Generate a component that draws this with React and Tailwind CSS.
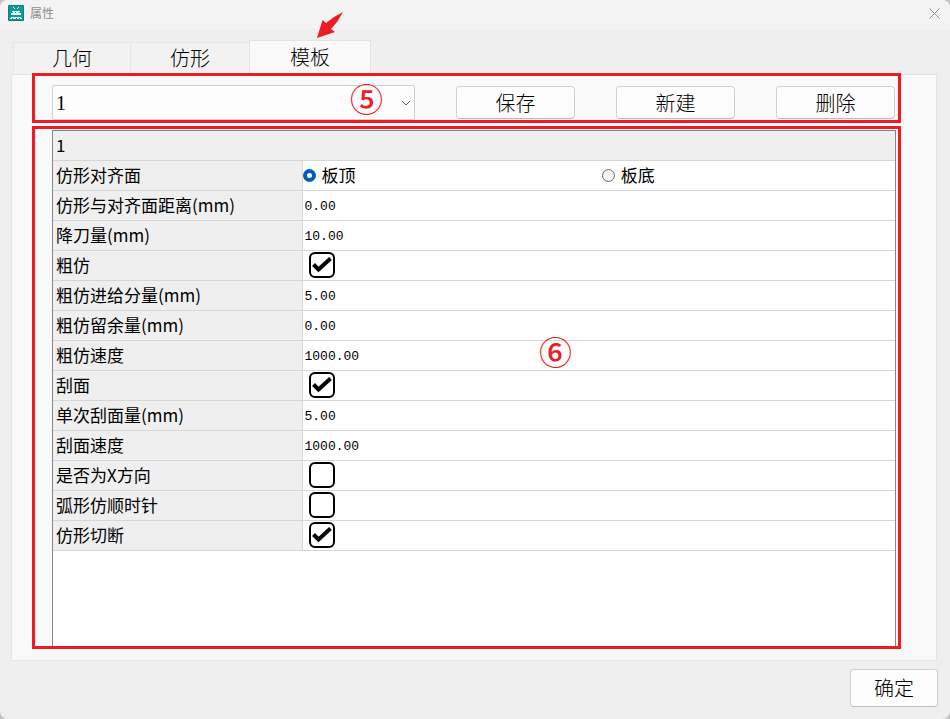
import React, { useState } from "react";

const tabs = [
  { name: "几何", width: "w-[117px]" },
  { name: "仿形", width: "w-[119px]" },
  { name: "模板", width: "w-[122px]" },
];

const rows = [
  { id: "side", label: "仿形对齐面", type: "radio", options: ["板顶", "板底"] },
  { id: "distance", label: "仿形与对齐面距离(mm)", type: "number", value: "0.00" },
  { id: "drop", label: "降刀量(mm)", type: "number", value: "10.00" },
  { id: "rough", label: "粗仿", type: "check", value: true },
  { id: "roughStep", label: "粗仿进给分量(mm)", type: "number", value: "5.00" },
  { id: "roughRest", label: "粗仿留余量(mm)", type: "number", value: "0.00" },
  { id: "roughSpeed", label: "粗仿速度", type: "number", value: "1000.00" },
  { id: "scrape", label: "刮面", type: "check", value: true },
  { id: "scrapeStep", label: "单次刮面量(mm)", type: "number", value: "5.00" },
  { id: "scrapeSpeed", label: "刮面速度", type: "number", value: "1000.00" },
  { id: "xDir", label: "是否为X方向", type: "check", value: false },
  { id: "clockwise", label: "弧形仿顺时针", type: "check", value: false },
  { id: "cut", label: "仿形切断", type: "check", value: true },
];

function AppIcon() {
  return (
    <svg width="16" height="16" viewBox="0 0 16 16" aria-hidden="true">
      <rect width="16" height="16" rx="1" fill="#0c7f80" />
      <rect x="1" y="1" width="14" height="14" fill="#109a9a" />
      <path
        d="M5 2h1v1h1v1h2V3h1V2h1v1h-1v1H7V4H6V3H5zM4 6h8v1H4zM3 8h10v2H3zM5 7h2v1H5zM8 7h3v1H8zM3 12h10v1h1v1h-2v-1h-1v1H9v-1H8v1H5v-1H4v1H2v-1h1z"
        fill="#e8f7f6"
      />
    </svg>
  );
}

function Button({ children, className }) {
  return (
    <button
      className={`rounded border border-[#d0d0d0] border-b-[#bcbcbc] bg-[#fdfdfd] text-[20px] leading-6 text-black ${className}`}
    >
      {children}
    </button>
  );
}

function CheckBox({ id, checked, onChange }) {
  return (
    <div className="relative ml-1.5 size-[26px]">
      <input
        id={id}
        type="checkbox"
        checked={checked}
        onChange={onChange}
        className="block size-[26px] appearance-none rounded-md border-2 border-black bg-white"
      />
      {checked && (
        <svg
          className="pointer-events-none absolute inset-0"
          width="26"
          height="26"
          viewBox="0 0 26 26"
          aria-hidden="true"
        >
          <path d="M4.5 12.5L9.5 17.5L21.5 6.5" fill="none" stroke="#000" strokeWidth="4" />
        </svg>
      )}
    </div>
  );
}

function PropertyTable() {
  const [values, setValues] = useState(() => {
    const start = { side: "板顶" };
    rows.forEach((row) => {
      if (row.type !== "radio") start[row.id] = row.value;
    });
    return start;
  });

  const update = (id, value) => setValues({ ...values, [id]: value });

  return (
    <table className="w-full table-fixed border-collapse text-[17px] leading-6">
      <colgroup>
        <col className="w-[249px]" />
        <col />
      </colgroup>
      <thead>
        <tr className="h-[29px] border-b border-[#d6d6d6] bg-[#efefef]">
          <th colSpan={2} className="p-0 pl-[3px] text-left font-normal">
            1
          </th>
        </tr>
      </thead>
      <tbody>
        {rows.map((row) => (
          <tr key={row.id} className="h-[30px] border-b border-[#d6d6d6]">
            <th
              scope="row"
              className="border-r border-[#d6d6d6] bg-[#efefef] p-0 pl-[3px] text-left font-normal"
            >
              <label htmlFor={row.id}>{row.label}</label>
            </th>
            <td className="p-0">
              {row.type === "radio" && (
                <div id={row.id} role="radiogroup" className="grid grid-cols-2 gap-1.5">
                  {row.options.map((option) => (
                    <label key={option} className="flex items-center gap-1.5">
                      <input
                        type="radio"
                        name={row.id}
                        checked={values[row.id] === option}
                        onChange={() => update(row.id, option)}
                        className="size-[13px] appearance-none rounded-full border border-[#6b6b6b] bg-[#f3f3f3] checked:border-4 checked:border-[#005fb8] checked:bg-white"
                      />
                      {option}
                    </label>
                  ))}
                </div>
              )}
              {row.type === "number" && (
                <input
                  id={row.id}
                  type="text"
                  value={values[row.id]}
                  onChange={(e) => update(row.id, e.target.value)}
                  className="block w-full bg-transparent pt-[3px] pl-0.5 font-['Liberation_Mono',monospace] text-[13px] leading-6 outline-none"
                />
              )}
              {row.type === "check" && (
                <CheckBox
                  id={row.id}
                  checked={values[row.id]}
                  onChange={(e) => update(row.id, e.target.checked)}
                />
              )}
            </td>
          </tr>
        ))}
      </tbody>
    </table>
  );
}

function App() {
  const [active, setActive] = useState("模板");

  return (
    <div className="bg-[#c4c4c4] font-['Noto_Sans_CJK_SC',sans-serif] text-black">
      <div className="flex min-h-screen flex-col overflow-hidden rounded-lg bg-[#efefef]">
        <header className="flex h-[29px] items-center gap-1.5 bg-[#f3f3f3] pr-2 pb-[3px] pl-2">
          <AppIcon />
          <h1 className="flex-1 text-[12px] leading-4 text-[#8c8c8c]">属性</h1>
          <button aria-label="关闭" className="p-0.5">
            <svg width="11" height="11" viewBox="0 0 11 11" aria-hidden="true">
              <path d="M.5 .5l10 10M10.5 .5l-10 10" stroke="#8a8a8a" />
            </svg>
          </button>
        </header>

        <div role="tablist" className="flex items-end pt-[11px] pl-[13px] font-light">
          {tabs.map((tab) => (
            <div key={tab.name} className={`relative ${tab.width}`}>
              <button
                role="tab"
                aria-selected={active === tab.name}
                onClick={() => setActive(tab.name)}
                className={
                  active === tab.name
                    ? "block h-[34px] w-full border border-b-0 border-[#e5e5e5] bg-[#f9f9f9] pb-0.5 text-[20px] leading-6"
                    : "block h-8 w-full border border-r-0 border-b-0 border-[#e5e5e5] bg-[#f2f2f2] pb-0.5 text-[20px] leading-6"
                }
              >
                {tab.name}
              </button>
              {tab.name === "模板" && (
                <svg
                  className="absolute -top-7 left-[68px]"
                  width="26"
                  height="26"
                  viewBox="0 0 26 26"
                  aria-hidden="true"
                >
                  <path d="M0 26L5.5 8L9 11L17 5L26 0L20 10L14 17L18 20Z" fill="#ed1c24" />
                </svg>
              )}
            </div>
          ))}
        </div>

        <main className="relative mr-[13px] ml-[11px] flex flex-1 flex-col border border-[#e5e5e5] bg-[#f9f9f9] pr-[35px] pb-[11px] pl-5">
          <section className="-mt-0.5 flex items-center gap-[41px] border-3 border-[#ed1c24] pt-[9px] pr-[3px] pl-[17px] font-light">
            <div className="relative flex-1">
              <select
                aria-label="模板"
                className="block h-[35px] w-full appearance-none rounded-xs border border-[#d0d0d0] bg-[#fdfdfd] pl-[3px] font-['Liberation_Serif',serif] text-[20px] leading-6"
              >
                <option>1</option>
              </select>
              <svg
                className="pointer-events-none absolute top-3.5 right-1"
                width="10"
                height="8"
                viewBox="0 0 10 8"
                aria-hidden="true"
              >
                <path d="M1 2l4 4l4-4" fill="none" stroke="#5f5f5f" />
              </svg>
              <span className="pointer-events-none absolute -top-[3px] right-8 text-[33px] leading-8 font-medium text-[#ed1c24]">
                ⑤
              </span>
            </div>
            <Button className="h-[33px] w-[119px]">保存</Button>
            <Button className="h-[33px] w-[119px]">新建</Button>
            <Button className="h-[33px] w-[119px]">删除</Button>
          </section>

          <section className="relative mt-[3px] flex flex-1 flex-col border-3 border-[#ed1c24] pt-px pr-0.5 pl-[17px]">
            <div className="flex-1 border border-b-0 border-[#828790] bg-white">
              <PropertyTable />
            </div>
            <span className="pointer-events-none absolute top-[206px] right-[326px] text-[33px] leading-8 font-medium text-[#ed1c24]">
              ⑥
            </span>
          </section>
        </main>

        <footer className="flex justify-end pt-2 pr-3 pb-3 font-light">
          <Button className="h-[38px] w-[88px]">确定</Button>
        </footer>
      </div>
    </div>
  );
}

export default App;
